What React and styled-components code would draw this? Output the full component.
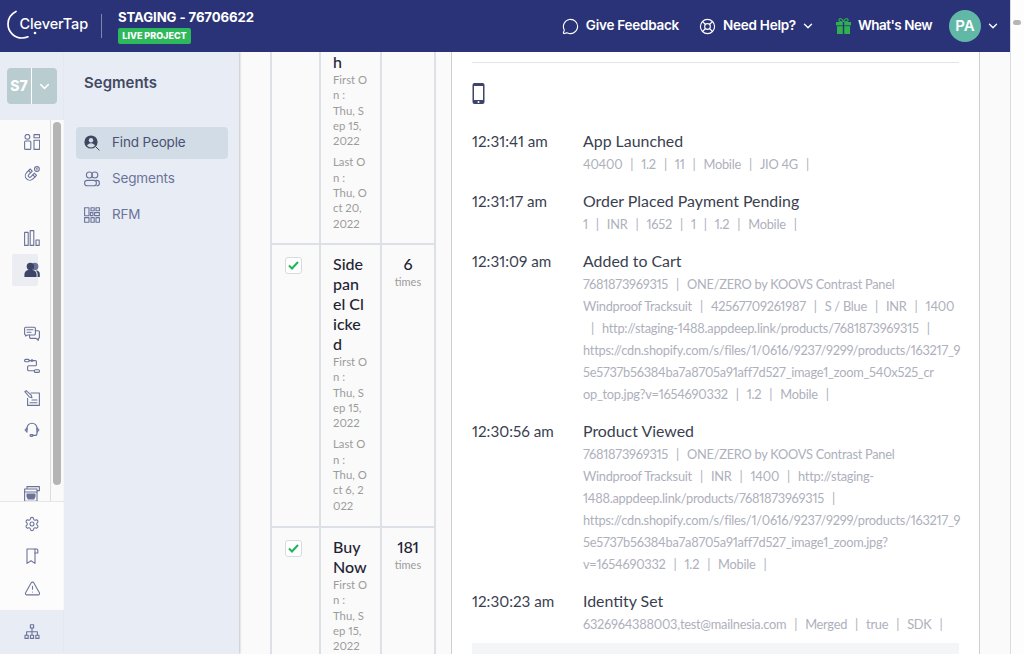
import React from 'react';
import styled, { createGlobalStyle } from 'styled-components';
import { ChevronDown, Settings, TriangleAlert, LifeBuoy, MessageCircle } from 'lucide-react';

const GlobalStyle = createGlobalStyle`
  html, body { margin: 0; padding: 0; height: 100%; overflow: hidden; background: #fff; }
  * { box-sizing: border-box; }
`;

const Shell = styled.div`
  display: flex;
  width: 1024px;
  height: 654px;
  overflow: hidden;
`;
const MainColumn = styled.div`
  width: 1010px;
  height: 654px;
  display: flex;
  flex-direction: column;
`;
const PageScroll = styled.div`
  width: 14px;
  border-left: 1px solid #dcdcdc;
  background: #fdfdfd;
  padding: 20px 0 0 2px;
`;
const PageThumb = styled.div`
  width: 8px;
  height: 5px;
  border-radius: 3px;
  background: #b5b5b5;
`;

const TopBar = styled.header`
  height: 52px;
  flex: none;
  background: #2a3377;
  color: #fff;
  display: flex;
  align-items: center;
  font-family: Inter, "Noto Sans", sans-serif;
  position: relative;
  z-index: 3;
`;
const Logo = styled.svg`
  width: 90px;
  height: 36px;
  margin-left: 6px;
  flex: none;
`;
const BarDivider = styled.div`
  width: 1px;
  height: 24px;
  margin-left: 5px;
  background: #7f86ad;
`;
const Project = styled.div`
  margin-left: 16px;
  display: flex;
  flex-direction: column;
  align-items: flex-start;
`;
const ProjectName = styled.div`
  font-size: 13.2px;
  font-weight: 700;
  line-height: 17px;
  letter-spacing: -0.1px;
`;
const LiveBadge = styled.div`
  margin-top: 2px;
  height: 16px;
  width: 73px;
  background: #2eb85c;
  border-radius: 2px;
  font-size: 9px;
  font-weight: 800;
  line-height: 16px;
  text-align: center;
  white-space: nowrap;
`;
const BarActions = styled.nav`
  margin-left: auto;
  display: flex;
  align-items: center;
  padding-right: 10px;
`;
const BarLink = styled.div`
  display: flex;
  align-items: center;
  gap: 7px;
  margin-left: ${p => p.$gap}px;
  padding-bottom: 2px;
  font-size: 13.5px;
  font-weight: 600;
  letter-spacing: ${p => p.$tight ? '-0.5px' : '-0.25px'};
  white-space: nowrap;
  svg { margin-top: 2px; }
`;
const Caret = styled.span`
  display: flex;
  margin-left: -2px;
`;
const Avatar = styled.div`
  width: 32px;
  height: 32px;
  border-radius: 50%;
  background: #62b8a6;
  margin-left: 17px;
  font-size: 15px;
  font-weight: 600;
  line-height: 32px;
  text-align: center;
`;
const AvatarCaret = styled.div`
  margin-left: 5px;
  display: flex;
`;

const Body = styled.div`
  flex: 1;
  min-height: 0;
  display: flex;
  overflow: hidden;
`;

const Rail = styled.aside`
  width: 64px;
  flex: none;
  display: flex;
  flex-direction: column;
  background: #fafafa;
`;
const RailTop = styled.div`
  height: 68px;
  flex: none;
  background: #e8edf5;
  padding: 16px 0 0 7px;
`;
const Switcher = styled.div`
  width: 50px;
  height: 36px;
  display: flex;
  border-radius: 4px;
  overflow: hidden;
  background: #b9cccf;
  color: #fff;
`;
const SwitcherName = styled.div`
  width: 25px;
  border-right: 1px solid #fff;
  font-family: Inter, sans-serif;
  font-size: 14px;
  font-weight: 800;
  line-height: 36px;
  text-align: center;
`;
const SwitcherCaret = styled.div`
  flex: 1;
  display: flex;
  align-items: center;
  justify-content: center;
`;
const RailScroll = styled.div`
  height: 381px;
  flex: none;
  display: flex;
  overflow: hidden;
`;
const RailList = styled.div`
  width: 51px;
  border-right: 1px solid #dcdcdc;
  padding-top: 6px;
  height: 381px;
`;
const RailTrack = styled.div`
  flex: 1;
  padding: 2px 3px 0 2px;
`;
const RailThumb = styled.div`
  width: 8px;
  height: 363px;
  border-radius: 4px;
  background: #b5b5b5;
`;
const RailItem = styled.div`
  width: 26px;
  height: 32px;
  margin: ${p => (p.$spaced ? '32px' : '0')} 0 0 12px;
  padding-left: 12px;
  display: flex;
  align-items: center;
  border-radius: 2px;
  background: ${p => (p.$active ? '#ebedf3' : 'transparent')};
  svg { flex: none; }
`;
const RailBottom = styled.div`
  height: 109px;
  flex: none;
  border-top: 1px solid #e6e6e6;
  background: #fcfcfc;
  position: relative;
  padding-top: 6px;
`;
const RailFoot = styled.div`
  flex: 1;
  background: #e8edf5;
  padding-top: 6px;
`;

const SubNav = styled.div`
  width: 175px;
  flex: none;
  background: #e8edf5;
  box-shadow: 1px 0 2px rgba(0, 0, 0, 0.22);
  padding: 0 11px 0 12px;
  font-family: Inter, sans-serif;
  position: relative;
  z-index: 2;
`;
const SubTitle = styled.h2`
  margin: 21px 0 34px 8px;
  font-size: 15px;
  line-height: 20px;
  font-weight: 600;
  color: #434a63;
`;
const SubItem = styled.div`
  height: 32px;
  margin-bottom: 4px;
  display: flex;
  align-items: center;
  gap: 12px;
  padding: 0 0 2px 8px;
  border-radius: 4px;
  background: ${p => (p.$active ? '#d2dce6' : 'transparent')};
  color: ${p => (p.$active ? '#4a5170' : '#6c7399')};
  font-size: 13.5px;
  letter-spacing: -0.15px;
  svg { margin-top: 2px; }
`;

const Content = styled.main`
  flex: 1;
  min-width: 0;
  display: flex;
  background: #fafafa;
  padding-left: 31px;
  font-family: Lato, "Open Sans", sans-serif;
  font-variant-numeric: proportional-nums;
  overflow: hidden;
`;
const EventTable = styled.div`
  width: 166px;
  flex: none;
  border-right: 2px solid #dde1e6;
  border-left: 2px solid #dde1e6;
  align-self: stretch;
`;
const TableRow = styled.div`
  display: flex;
  height: ${p => p.$height}px;
  border-bottom: 2px solid #dde1e6;
`;
const CheckCell = styled.div`
  width: 47px;
  flex: none;
  padding: 12px 0 0 13px;
`;
const NameCell = styled.div`
  width: 61px;
  flex: none;
  border-left: 2px solid #dde1e6;
  padding: ${p => (p.$top ? '0' : '9px')} 0 0 12px;
`;
const CountCell = styled.div`
  flex: 1;
  border-left: 2px solid #dde1e6;
  padding-top: 9px;
  text-align: center;
`;
const CheckBox = styled.div`
  width: 17px;
  height: 17px;
  background: #fff;
  border: 1px solid #d6dbe0;
  border-radius: 3px;
  display: flex;
  align-items: center;
  justify-content: center;
`;
const RowTitle = styled.div`
  font-size: 16px;
  line-height: 20px;
  font-weight: 500;
  color: #1f2433;
`;
const Stamp = styled.div`
  font-size: 11.3px;
  line-height: 15.3px;
  color: #9c9c9c;
  margin-bottom: 6px;
  white-space: nowrap;
`;
const Count = styled.div`
  font-size: 16px;
  line-height: 20px;
  font-weight: 500;
  letter-spacing: -0.3px;
  color: #1f2433;
`;
const Times = styled.div`
  font-size: 11px;
  line-height: 15px;
  color: #9c9c9c;
`;

const Card = styled.section`
  width: 529px;
  flex: none;
  margin-left: 15px;
  background: #fff;
  border-left: 1px solid #cfcfcf;
  border-right: 1px solid #cfcfcf;
  padding: 10px 20px 0;
`;
const CardRule = styled.div`
  height: 1px;
  background: #e4e4e4;
`;
const DeviceIcon = styled.svg`
  display: block;
  width: 13px;
  height: 21px;
  margin: 20px 0 26px 0;
`;
const Event = styled.div`
  display: flex;
  margin-bottom: 15px;
`;
const EventTime = styled.div`
  width: 111px;
  flex: none;
  font-size: 15.2px;
  line-height: 23px;
  color: #3a3f50;
`;
const EventBody = styled.div`
  flex: 1;
  min-width: 0;
`;
const EventName = styled.div`
  font-size: 15.9px;
  line-height: 21px;
  margin-bottom: 2px;
  color: #3a3f50;
`;
const DetailLine = styled.div`
  font-size: 12.8px;
  line-height: 22px;
  letter-spacing: -0.25px;
  color: #aeb0bc;
  white-space: nowrap;
`;
const Sep = styled.span`
  margin: 0 8px;
`;
const CardBand = styled.div`
  height: 40px;
  margin-top: -7px;
  background: #f4f5f7;
`;
const Gutter = styled.div`
  flex: 1;
  background: #fafafa;
`;

const ink = '#6c7399';

function Ico({ children, fill = 'none', color = ink, size = 16 }) {
  return (
    <svg width={size} height={size} viewBox="0 0 16 16" fill={fill} stroke={fill === 'none' ? color : 'none'} strokeWidth="1.1" strokeLinecap="round" strokeLinejoin="round">
      {children}
    </svg>
  );
}

const railIcons = {
  dash: <Ico><circle cx="3.4" cy="2.8" r="2.4" /><rect x="0.6" y="7" width="6.2" height="8.4" rx="1" /><rect x="10" y="0.6" width="5.6" height="3.2" /><rect x="10" y="6.2" width="5.6" height="9.2" /></Ico>,
  magnet: <Ico><g transform="rotate(45 6.500 9)"><path d="M2 5v5a4.500 4.500 0 0 0 9 0V5H8v5a1.500 1.500 0 0 1-3 0V5Z" /><path d="M2 7.200h3M8 7.200h3" /></g><circle cx="12.900" cy="3" r="2.400" /><path d="M12.900 2.200v1.600" /></Ico>,
  bars: <Ico><rect x="0.6" y="2.4" width="3.6" height="13" /><rect x="6.2" y="0.6" width="3.6" height="14.8" /><rect x="12" y="10" width="3.2" height="5.4" /></Ico>,
  people: <Ico fill="#3c4468"><circle cx="10.8" cy="4.4" r="3.6" fill="#6c7399" /><circle cx="6.4" cy="4.4" r="3.7" /><path d="M0.4 15v-2.6A4.4 4.4 0 0 1 4.8 8h3.4a4.4 4.4 0 0 1 4.4 4.4V15Z" /><path d="M13.6 15v-2.8a4.6 4.6 0 0 0-1.8-3.8A3.8 3.8 0 0 1 15.8 12v3Z" /></Ico>,
  chat: <Ico><path d="M1.8 1.2h8.4a1.2 1.2 0 0 1 1.2 1.2v5.4a1.2 1.2 0 0 1-1.2 1.2H3.6L1.6 10V9H1.8A1.2 1.2 0 0 1 .6 7.8V2.4a1.2 1.2 0 0 1 1.2-1.2Z" /><path d="M3 3.8h6M3 6.2h4" /><path d="M11.4 4.8h2.8a1.2 1.2 0 0 1 1.2 1.2v5.2a1.2 1.2 0 0 1-1.2 1.2v2l-2-2H6.8a1.2 1.2 0 0 1-1.2-1.2V9" /></Ico>,
  flow: <Ico><rect x="0.6" y="1.4" width="4.6" height="2.4" rx="1" /><path d="M5.2 2.6h6.2a1 1 0 0 1 1 1v3.2a1 1 0 0 1-1 1H4.6a1 1 0 0 0-1 1v3a1 1 0 0 0 1 1H10" /><rect x="10.4" y="11.8" width="5" height="2.6" rx="1" /><circle cx="8" cy="2.6" r="0.8" /></Ico>,
  note: <Ico><path d="M7 3h8.4v12.4H3.6V8.4" /><path d="m.8 1.6 1.4-1 5 4.6.8 2.6-2.6-.8Z" /><path d="M8 10h5M6 12.8h7" /></Ico>,
  headset: <Ico><path d="M3 8V6.2a5 5 0 0 1 10 0V8" /><path d="M3 5.8 1 8l2 2.2ZM13 5.8 15 8l-2 2.2Z" /><path d="M13 10v1.4a2 2 0 0 1-2 2H8.6" /><rect x="6" y="12.6" width="3" height="1.8" rx="0.9" /></Ico>,
  archive: <Ico><rect x="3" y="0.6" width="12.4" height="4" /><rect x="0.6" y="3" width="12.4" height="12.4" fill="#fafafa" /><path d="M0.6 6h12.4" /><path d="M3 8h8v2.6l-1.2 2.4H4.2L3 10.6Z" fill={ink} /></Ico>,
  book: <Ico><path d="M3 1h8v14.4L7 12.8l-4 2.6Z" /><path d="M11 1h1.8a1 1 0 0 1 1 1v3H11" /></Ico>,
  tree: <Ico><rect x="6.4" y="0.8" width="3.2" height="3.2" /><path d="M8 4v3.8M2.6 11V7.8h10.8V11M8 7.8V11" /><rect x="1" y="11.2" width="3.2" height="3.2" /><rect x="6.4" y="11.2" width="3.2" height="3.2" /><rect x="11.8" y="11.2" width="3.2" height="3.2" /></Ico>,
};

const railTop = [
  { icon: 'dash' },
  { icon: 'magnet' },
  { icon: 'bars', spaced: true },
  { icon: 'people', active: true },
  { icon: 'chat', spaced: true },
  { icon: 'flow' },
  { icon: 'note' },
  { icon: 'headset' },
  { icon: 'archive', spaced: true },
];

const rows = [
  {
    height: 193, top: true, checked: false,
    title: ['h'],
    first: ['First O', 'n :', 'Thu, S', 'ep 15,', '2022'],
    last: ['Last O', 'n :', 'Thu, O', 'ct 20,', '2022'],
  },
  {
    height: 283, checked: true, count: '6',
    title: ['Side', 'pan', 'el Cl', 'icke', 'd'],
    first: ['First O', 'n :', 'Thu, S', 'ep 15,', '2022'],
    last: ['Last O', 'n :', 'Thu, O', 'ct 6, 2', '022'],
  },
  {
    height: 200, checked: true, count: '181',
    title: ['Buy', 'Now'],
    first: ['First O', 'n :', 'Thu, S', 'ep 15,', '2022'],
    last: [],
  },
];

const events = [
  { time: '12:31:41 am', name: 'App Launched', lines: ['40400 | 1.2 | 11 | Mobile | JIO 4G |'] },
  { time: '12:31:17 am', name: 'Order Placed Payment Pending', lines: ['1 | INR | 1652 | 1 | 1.2 | Mobile |'] },
  {
    time: '12:31:09 am', name: 'Added to Cart',
    lines: [
      '7681873969315 | ONE/ZERO by KOOVS Contrast Panel',
      'Windproof Tracksuit | 42567709261987 | S / Blue | INR | 1400',
      '| http://staging-1488.appdeep.link/products/7681873969315 |',
      'https://cdn.shopify.com/s/files/1/0616/9237/9299/products/163217_9',
      '5e5737b56384ba7a8705a91aff7d527_image1_zoom_540x525_cr',
      'op_top.jpg?v=1654690332 | 1.2 | Mobile |',
    ],
  },
  {
    time: '12:30:56 am', name: 'Product Viewed',
    lines: [
      '7681873969315 | ONE/ZERO by KOOVS Contrast Panel',
      'Windproof Tracksuit | INR | 1400 | http://staging-',
      '1488.appdeep.link/products/7681873969315 |',
      'https://cdn.shopify.com/s/files/1/0616/9237/9299/products/163217_9',
      '5e5737b56384ba7a8705a91aff7d527_image1_zoom.jpg?',
      'v=1654690332 | 1.2 | Mobile |',
    ],
  },
  { time: '12:30:23 am', name: 'Identity Set', lines: ['6326964388003,test@mailnesia.com | Merged | true | SDK |'] },
];

function Detail({ text }) {
  const parts = text.split(/\s*\|\s*/);
  return (
    <DetailLine>
      {parts.map((part, i) => (
        <React.Fragment key={i}>
          {i > 0 && <Sep>|</Sep>}
          {part}
        </React.Fragment>
      ))}
    </DetailLine>
  );
}

function Lines({ items, as: Tag }) {
  if (!items.length) return null;
  return <Tag>{items.map((l, i) => <div key={i}>{l}</div>)}</Tag>;
}

export default function App() {
  return (
    <Shell>
      <GlobalStyle />
      <MainColumn>
        <TopBar>
          <Logo viewBox="0 0 90 36">
            <path d="M10 3.5C5 6 2 10.500 2 16c0 7.500 6 14 14 14 2 0 4-.3 6-1.200" fill="none" stroke="#fff" strokeWidth="1.700" strokeLinecap="round" />
            <circle cx="29" cy="25" r="1.300" fill="#fff" />
            <text x="13.500" y="20.500" fill="#fff" fontFamily="Inter, sans-serif" fontSize="14.500" fontWeight="500" letterSpacing="-0.100">CleverTap</text>
          </Logo>
          <BarDivider />
          <Project>
            <ProjectName>STAGING - 76706622</ProjectName>
            <LiveBadge>LIVE PROJECT</LiveBadge>
          </Project>
          <BarActions>
            <BarLink $gap={0}>
              <MessageCircle size={17} strokeWidth={1.6} />
              Give Feedback
            </BarLink>
            <BarLink $gap={20}>
              <LifeBuoy size={17} strokeWidth={1.6} />
              Need Help?
              <Caret><ChevronDown size={14} strokeWidth={2.4} /></Caret>
            </BarLink>
            <BarLink $gap={21} $tight>
              <svg width="15" height="16" viewBox="0 0 15 16" fill="#2eb24f">
                <rect x="0" y="4" width="15" height="3.400" />
                <rect x="1" y="8.200" width="13" height="7.800" />
                <path d="M7 4C4 4 2.500 2.800 3 1.400 3.500 0 6 .5 7.500 3.500 9 .5 11.500 0 12 1.400 12.500 2.800 11 4 8 4Z" fill="none" stroke="#2eb24f" strokeWidth="1.100" />
                <rect x="6.800" y="4" width="1.400" height="12" fill="#2a3377" />
              </svg>
              What's New
            </BarLink>
            <Avatar>PA</Avatar>
            <AvatarCaret>
              <ChevronDown size={14} strokeWidth={2.4} />
            </AvatarCaret>
          </BarActions>
        </TopBar>
        <Body>
          <Rail>
            <RailTop>
              <Switcher>
                <SwitcherName>S7</SwitcherName>
                <SwitcherCaret>
                  <ChevronDown size={15} strokeWidth={2.4} />
                </SwitcherCaret>
              </Switcher>
            </RailTop>
            <RailScroll>
              <RailList>
                {railTop.map((item, i) => (
                  <RailItem key={i} $active={item.active} $spaced={item.spaced}>
                    {railIcons[item.icon]}
                  </RailItem>
                ))}
              </RailList>
              <RailTrack>
                <RailThumb />
              </RailTrack>
            </RailScroll>
            <RailBottom>
              <RailItem><Settings size={16} strokeWidth={1.6} color={ink} /></RailItem>
              <RailItem>{railIcons.book}</RailItem>
              <RailItem><TriangleAlert size={17} strokeWidth={1.5} color={ink} /></RailItem>
            </RailBottom>
            <RailFoot>
              <RailItem>{railIcons.tree}</RailItem>
            </RailFoot>
          </Rail>
          <SubNav>
            <SubTitle>Segments</SubTitle>
            <SubItem $active>
              <svg width="16" height="16" viewBox="0 0 16 16">
                <circle cx="7" cy="7" r="6.600" fill="#3f4660" />
                <circle cx="7" cy="5.200" r="2.200" fill="#d2dce6" />
                <path d="M3 10.800c.6-1.800 2.200-2.600 4-2.600s3.400.8 4 2.600a5.400 5.400 0 0 1-8 0Z" fill="#d2dce6" />
                <path d="m12 12 3.400 3.400" stroke="#3f4660" strokeWidth="1" />
              </svg>
              Find People
            </SubItem>
            <SubItem>
              <Ico>
                <circle cx="5.400" cy="4" r="3" />
                <circle cx="10.800" cy="4" r="3" />
                <rect x="0.600" y="9.400" width="11.800" height="5.400" rx="2.600" />
                <path d="M12 9.400h.8a2.600 2.600 0 0 1 2.600 2.600v.2a2.600 2.600 0 0 1-2.600 2.600" />
              </Ico>
              Segments
            </SubItem>
            <SubItem>
              <Ico>
                <rect x="0.600" y="0.800" width="4.400" height="8" />
                <rect x="7" y="0.800" width="3.200" height="3" />
                <rect x="12" y="0.800" width="3.400" height="3" />
                <rect x="6.400" y="5.600" width="2.600" height="3" />
                <rect x="10.600" y="5.600" width="4.800" height="3" />
                <rect x="0.600" y="10.600" width="4.400" height="4.600" />
                <rect x="7" y="10.600" width="3.200" height="4.600" />
                <rect x="12" y="10.600" width="3.400" height="4.600" />
              </Ico>
              RFM
            </SubItem>
          </SubNav>
          <Content>
            <EventTable>
              {rows.map((row, i) => (
                <TableRow key={i} $height={row.height}>
                  <CheckCell>
                    {row.checked && (
                      <CheckBox>
                        <svg width="11" height="9" viewBox="0 0 11 9" fill="none" stroke="#1fb45a" strokeWidth="2">
                          <path d="m1 4.500 3 3L10 1" />
                        </svg>
                      </CheckBox>
                    )}
                  </CheckCell>
                  <NameCell $top={row.top}>
                    <Lines items={row.title} as={RowTitle} />
                    <Lines items={row.first} as={Stamp} />
                    <Lines items={row.last} as={Stamp} />
                  </NameCell>
                  <CountCell>
                    {row.count && <Count>{row.count}</Count>}
                    {row.count && <Times>times</Times>}
                  </CountCell>
                </TableRow>
              ))}
            </EventTable>
            <Card>
              <CardRule />
              <DeviceIcon viewBox="0 0 13 21">
                <rect x="0.500" y="0" width="12" height="21" rx="2" fill="#3c4468" />
                <rect x="2" y="3" width="9" height="14" fill="#fff" />
                <circle cx="6.500" cy="19" r="1" fill="#fff" />
              </DeviceIcon>
              {events.map((ev, i) => (
                <Event key={i}>
                  <EventTime>{ev.time}</EventTime>
                  <EventBody>
                    <EventName>{ev.name}</EventName>
                    {ev.lines.map((l, j) => <Detail key={j} text={l} />)}
                  </EventBody>
                </Event>
              ))}
              <CardBand />
            </Card>
            <Gutter />
          </Content>
        </Body>
      </MainColumn>
      <PageScroll>
        <PageThumb />
      </PageScroll>
    </Shell>
  );
}
